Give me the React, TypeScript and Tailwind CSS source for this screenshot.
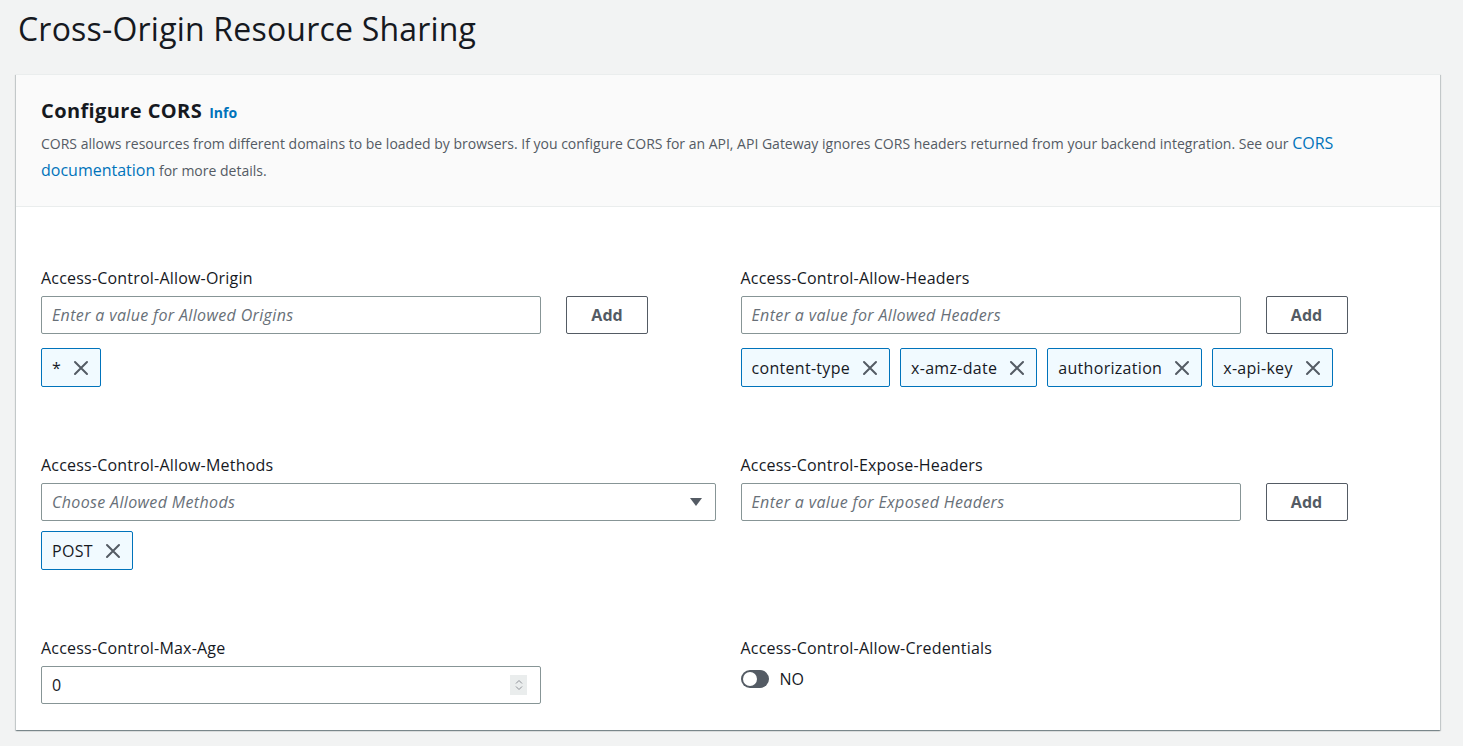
import React from "react";

const font = { fontFamily: "'Open Sans', Roboto, Arial, sans-serif" };

function XIcon() {
  return (
    <svg width="16" height="16" viewBox="0 0 16 16" fill="none" stroke="#545b64" strokeWidth="2" strokeLinecap="round">
      <path d="M2 2l12 12M14 2L2 14" />
    </svg>
  );
}

function Token({ label }: { label: string }) {
  return (
    <div className="flex h-[39px] items-center gap-[12px] rounded-[2px] border border-[#0073bb] bg-[#f1faff] pl-[10px] pr-[11px] text-[16px] tracking-[0.3px] text-[#16191f]">
      <span>{label}</span>
      <XIcon />
    </div>
  );
}

function Label({ children }: { children: React.ReactNode }) {
  return <div className="text-[16px] leading-[22px] tracking-[0.2px] text-[#16191f]">{children}</div>;
}

function TextInput({ placeholder }: { placeholder: string }) {
  return (
    <div className="flex h-[38px] w-[500px] items-center rounded-[2px] border border-[#879596] bg-white px-[10px]">
      <span className="text-[16px] italic tracking-[0.35px] text-[#687078]">{placeholder}</span>
    </div>
  );
}

function AddButton() {
  return (
    <div className="flex h-[38px] w-[82px] items-center justify-center rounded-[2px] border border-[#545b64] bg-white text-[16px] font-bold text-[#545b64]">
      Add
    </div>
  );
}

export default function App() {
  return (
    <div className="min-h-[746px] bg-[#f2f3f3] px-[16px] pt-[9px]" style={font}>
      <h1 className="pl-[2px] text-[32px] leading-[40px] tracking-[0.2px] text-[#16191f]">Cross-Origin Resource Sharing</h1>
      <div className="mt-[25px] mr-[7px] border-t border-[#eaeded] bg-white shadow-[0_1px_1px_0_rgba(0,28,36,0.3),1px_1px_1px_0_rgba(0,28,36,0.15),-1px_1px_1px_0_rgba(0,28,36,0.15)]">
        <div className="border-b border-[#eaeded] bg-[#fafafa] px-[25px] pt-[22px] pb-[22px]">
          <div className="flex items-baseline gap-[7px]">
            <h2 className="text-[20px] font-bold leading-[28px] tracking-[0.4px] text-[#16191f]">Configure CORS</h2>
            <span className="text-[14px] font-bold text-[#0073bb]">Info</span>
          </div>
          <p className="mt-[5px] text-[14px] leading-[26px] text-[#545b64]">
            CORS allows resources from different domains to be loaded by browsers. If you configure CORS for an API, API
            Gateway ignores CORS headers returned from your backend integration. See our{" "}
            <span className="text-[16px] text-[#0073bb]">CORS</span>
            <br />
            <span className="text-[16px] text-[#0073bb]">documentation</span> for more details.
          </p>
        </div>
        <div className="grid grid-cols-2 gap-x-[25px] px-[25px] pt-[60px] pb-[26px]">
          {/* Row 1 */}
          <div>
            <Label>Access-Control-Allow-Origin</Label>
            <div className="mt-[7px] flex gap-[25px]">
              <TextInput placeholder="Enter a value for Allowed Origins" />
              <AddButton />
            </div>
            <div className="mt-[14px] flex gap-[10px]">
              <Token label="*" />
            </div>
          </div>
          <div>
            <Label>Access-Control-Allow-Headers</Label>
            <div className="mt-[7px] flex gap-[25px]">
              <TextInput placeholder="Enter a value for Allowed Headers" />
              <AddButton />
            </div>
            <div className="mt-[14px] flex gap-[10px]">
              <Token label="content-type" />
              <Token label="x-amz-date" />
              <Token label="authorization" />
              <Token label="x-api-key" />
            </div>
          </div>

          {/* Row 2 */}
          <div className="mt-[67px]">
            <Label>Access-Control-Allow-Methods</Label>
            <div className="mt-[7px] flex h-[38px] items-center justify-between rounded-[2px] border border-[#879596] bg-white pl-[10px] pr-[12px]">
              <span className="text-[16px] italic tracking-[0.35px] text-[#687078]">Choose Allowed Methods</span>
              <svg width="14" height="10" viewBox="0 0 14 10">
                <path d="M1 1h12L7 9z" fill="#545b64" />
              </svg>
            </div>
            <div className="mt-[10px] flex gap-[10px]">
              <Token label="POST" />
            </div>
          </div>
          <div className="mt-[67px]">
            <Label>Access-Control-Expose-Headers</Label>
            <div className="mt-[7px] flex gap-[25px]">
              <TextInput placeholder="Enter a value for Exposed Headers" />
              <AddButton />
            </div>
          </div>

          {/* Row 3 */}
          <div className="mt-[67px]">
            <Label>Access-Control-Max-Age</Label>
            <div className="relative mt-[7px] flex h-[38px] w-[500px] items-center rounded-[2px] border border-[#879596] bg-white px-[10px]">
              <span className="text-[16px] text-[#16191f]">0</span>
              <div className="absolute right-[13px] top-[8px] flex h-[20px] w-[17px] flex-col items-center justify-center gap-[2px] bg-[#eaeded]">
                <svg width="8" height="5" viewBox="0 0 8 5" fill="none" stroke="#8d9096" strokeWidth="1">
                  <path d="M1 4.5L4 1.5L7 4.5" />
                </svg>
                <svg width="8" height="5" viewBox="0 0 8 5" fill="none" stroke="#8d9096" strokeWidth="1">
                  <path d="M1 0.5L4 3.5L7 0.5" />
                </svg>
              </div>
            </div>
          </div>
          <div className="mt-[67px]">
            <Label>Access-Control-Allow-Credentials</Label>
            <div className="mt-[8px] flex items-center gap-[11px]">
              <div className="flex h-[18px] w-[28px] items-center rounded-full bg-[#545b64] px-[2px]">
                <div className="h-[14px] w-[14px] rounded-full bg-white" />
              </div>
              <span className="text-[16px] text-[#16191f]">NO</span>
            </div>
          </div>
        </div>
      </div>
    </div>
  );
}
